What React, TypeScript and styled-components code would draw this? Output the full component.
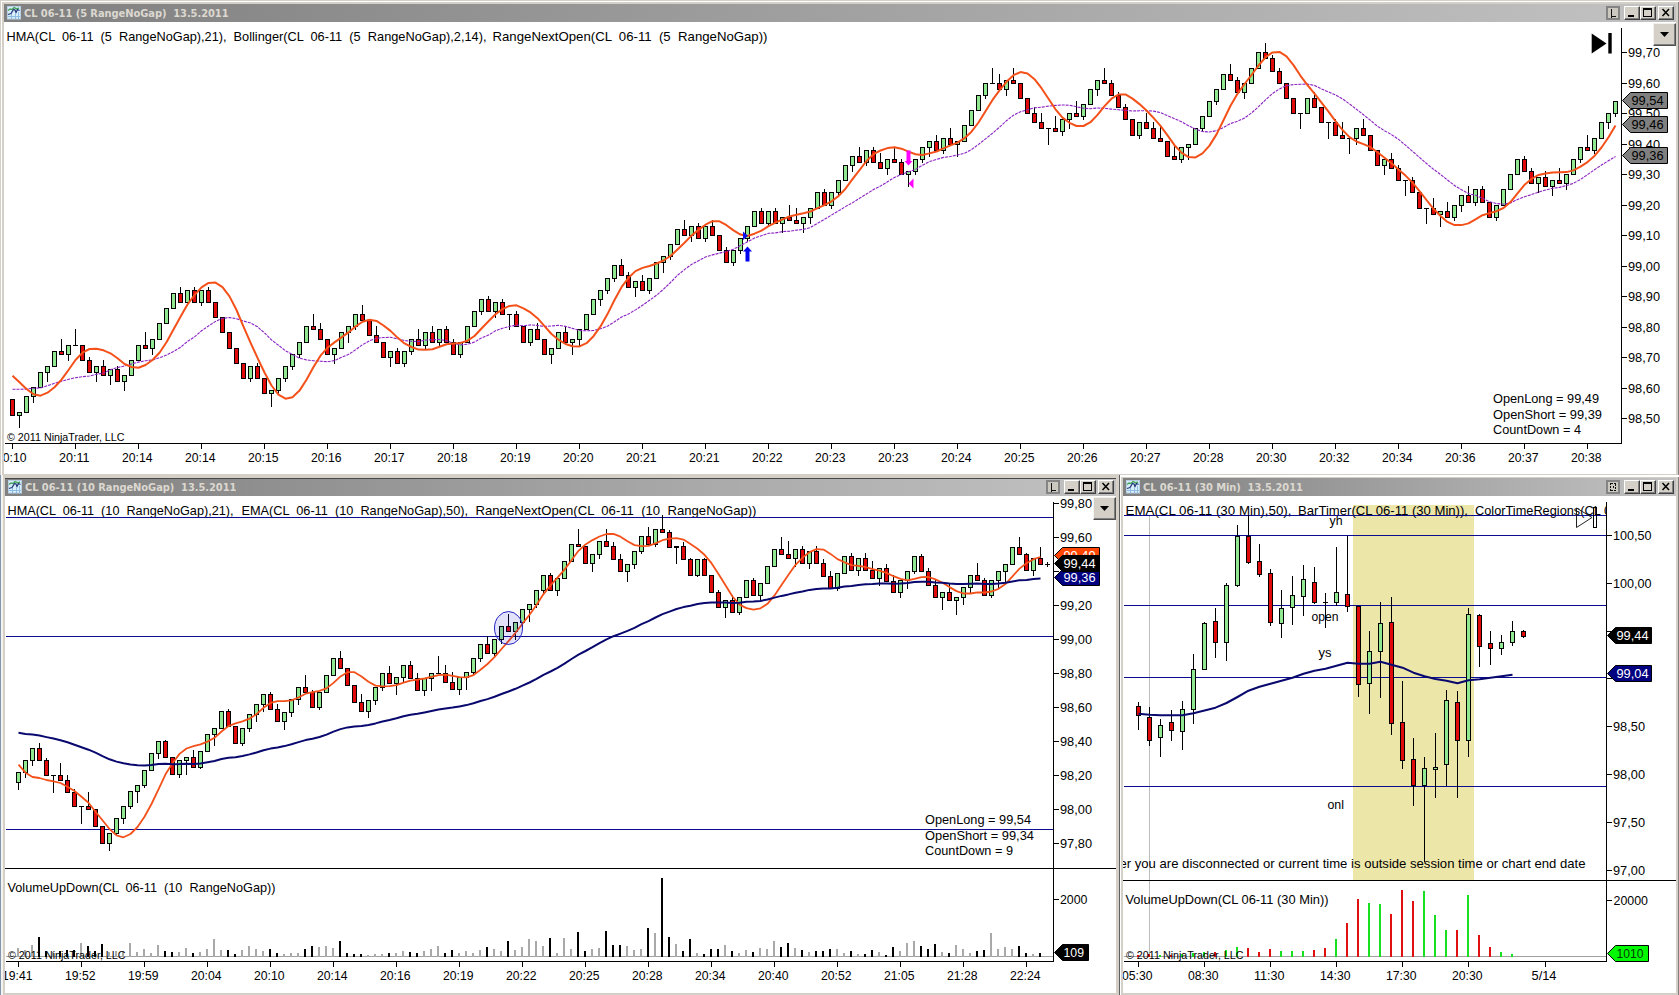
import React from 'react';
import styled, { createGlobalStyle } from 'styled-components';

const GlobalStyle = createGlobalStyle`
  html, body { margin: 0; padding: 0; }
  body { background: #d4d0c8; overflow: hidden; }
`;

const UP = '#90e890';
const DOWN = '#e00a0a';
const HMA_COLOR = '#f4511a';
const EMA_COLOR = '#08086e';
const LEVEL_COLOR = '#0c0c90';

/* ---------- window chrome ---------- */

const Desktop = styled.div`
  width: 1679px;
  height: 995px;
  display: flex;
  flex-direction: column;
  background: #d4d0c8;
  overflow: hidden;
`;

const Row = styled.div`
  display: flex;
  height: 520px;
`;

const Window = styled.section<{ $w: number; $h: number; $pad: string; $shadow: string }>`
  box-sizing: border-box;
  display: flex;
  flex-direction: column;
  width: ${(p) => p.$w}px;
  height: ${(p) => p.$h}px;
  padding: ${(p) => p.$pad};
  background: #d4d0c8;
  box-shadow: ${(p) => p.$shadow};
`;

const TitleBar = styled.header<{ $edge?: boolean }>`
  box-sizing: border-box;
  display: flex;
  align-items: center;
  flex: 0 0 18px;
  height: 18px;
  padding: 0 2px 0 3px;
  background: linear-gradient(90deg, #808080, #c2c2c2);
  box-shadow: ${(p) => (p.$edge ? 'inset 0 1px 0 #484848' : 'none')};
`;

const TitleText = styled.h1`
  flex: 1;
  margin: 0 0 0 3px;
  padding-top: 1px;
  font: bold 11px/17px 'DejaVu Sans Condensed', 'DejaVu Sans', sans-serif;
  letter-spacing: -0.05px;
  color: #dcd8d0;
  white-space: pre;
`;

const LinkButton = styled.span`
  box-sizing: border-box;
  display: flex;
  align-items: center;
  justify-content: center;
  width: 14px;
  height: 14px;
  margin-right: 4px;
  border: 2px solid #848484;
  background: #cbc8c0;
`;

const CaptionButton = styled.button<{ $gap?: boolean }>`
  box-sizing: border-box;
  display: block;
  width: 16px;
  height: 14px;
  margin: 0 0 0 ${(p) => (p.$gap ? 2 : 0)}px;
  padding: 0;
  border: 1px solid;
  border-color: #fff #404040 #404040 #fff;
  background: #d4d0c8;
  box-shadow: inset -1px -1px 0 #808080;
  line-height: 0;
`;

const Content = styled.div`
  position: relative;
  flex: 1;
  background: #fff;
  overflow: hidden;
`;

const MenuButton = styled.button<{ $right: number }>`
  position: absolute;
  top: 1px;
  right: ${(p) => p.$right}px;
  box-sizing: border-box;
  display: flex;
  align-items: center;
  justify-content: center;
  width: 23px;
  height: 23px;
  padding: 0;
  border: 1px solid;
  border-color: #f4f2ee #505050 #505050 #f4f2ee;
  background: #d4d0c8;
  box-shadow: inset -1px -1px 0 #808080;
`;

const Plot = styled.svg`
  display: block;
  font-family: 'Liberation Sans', Arial, sans-serif;
  font-size: 13px;
  fill: #000;
  text { white-space: pre; }
`;

const ChartIcon = () => (
  <svg width="14" height="14" viewBox="0 0 14 14">
    <rect x="0.5" y="0.5" width="13" height="12.5" fill="#d8eefa" stroke="#b8cfe4" />
    <path d="M1 10.5h12M4.5 8v5M8.5 8v5M11.5 6v7" stroke="#8fbce2" strokeWidth="1" fill="none" />
    <path d="M1 4.5l2-1.500 2 .5 2-2 3 1.500 2-1" stroke="#48a45c" strokeWidth="1.400" fill="none" />
    <path d="M1 8.500l3-1 2.500-4 1.500.5 1 2.500 1.500-3 2 1" stroke="#24397c" strokeWidth="1.300" fill="none" />
  </svg>
);

interface FrameProps {
  title: string;
  edge?: boolean;
  unlinked?: boolean;
}

const Caption = ({ title, edge, unlinked }: FrameProps) => (
  <TitleBar $edge={edge}>
    <ChartIcon />
    <TitleText>{title}</TitleText>
    <LinkButton>
      <svg width="8" height="10" viewBox="0 0 8 10" shapeRendering="crispEdges">
        {unlinked ? (
          <path d="M1.500 1v8M1.500 1.500h5M1.500 8.500h5M6.500 2v7M4 3.500v3" stroke="#111" strokeDasharray="2 1" fill="none" />
        ) : (
          <path d="M2.500 1v8.500M2 8.500h5" stroke="#111" fill="none" />
        )}
      </svg>
    </LinkButton>
    <CaptionButton>
      <svg width="14" height="12"><rect x="3" y="8" width="6" height="2" /></svg>
    </CaptionButton>
    <CaptionButton>
      <svg width="14" height="12" shapeRendering="crispEdges">
        <path d="M2.500 1v8.500h8V1" stroke="#000" fill="none" />
        <rect x="2" y="1" width="9" height="2" />
      </svg>
    </CaptionButton>
    <CaptionButton $gap>
      <svg width="14" height="12"><path d="M3.500 2l6.500 7M10 2l-6.500 7" stroke="#000" strokeWidth="1.500" /></svg>
    </CaptionButton>
  </TitleBar>
);

const Menu = ({ right }: { right: number }) => (
  <MenuButton $right={right}>
    <svg width="9" height="5"><path d="M0 0h9L4.500 5z" /></svg>
  </MenuButton>
);

/* ---------- series maths ---------- */

interface Bar { x: number; up: boolean; high: number; top: number; bottom: number; low: number }

const wma = (s: number[], end: number, n: number) => {
  let sum = 0;
  for (let k = 0; k < n; k++) sum += s[end - k] * (n - k);
  return (sum * 2) / (n * (n + 1));
};

const hma21 = (s: number[], i: number) => {
  const raw = [3, 2, 1, 0].map((b) => 2 * wma(s, i - b, 10) - wma(s, i - b, 21));
  return wma(raw, 3, 4);
};

const sma14 = (s: number[], i: number) => s.slice(i - 13, i + 1).reduce((a, b) => a + b, 0) / 14;

const linePath = (ys: number[], x0: number, step: number) =>
  ys.map((y, i) => `${i ? 'L' : 'M'}${x0 + i * step} ${y.toFixed(1)}`).join('');

/** Range bars: every bar spans `range` ticks and closes on its high or its low.
 *  Levels count ticks downwards from the top label of the price axis. */
const rangeBars = (
  open: number, closes: { level: number; up: boolean }[], range: number, x0: number, y: (n: number) => number,
): Bar[] =>
  closes.map(({ level, up }, i) => {
    const prev = i ? closes[i - 1].level : open;
    const high = up ? level : level - range;
    return {
      x: x0 + i * 7,
      up,
      high: Math.round(y(high)),
      top: Math.round(y(Math.min(prev, level))),
      bottom: Math.round(y(Math.max(prev, level))) + 1,
      low: Math.round(y(high + range)) + 1,
    };
  });

const Candles = ({ bars }: { bars: Bar[] }) => (
  <g shapeRendering="crispEdges">
    {bars.map((b) => {
      const h = b.bottom - b.top;
      return (
        <g key={b.x}>
          <rect x={b.x} y={b.high} width={1} height={Math.max(1, b.low - b.high)} />
          <rect x={b.x - 2} y={b.top} width={5} height={Math.max(1, h)} />
          {h > 2 && <rect x={b.x - 1} y={b.top + 1} width={3} height={h - 2} fill={b.up ? UP : DOWN} />}
        </g>
      );
    })}
  </g>
);

/* ---------- shared drawing parts ---------- */

const Label = ({ x, y, w, size, fill, children }: {
  x: number; y: number; w: number; size?: number; fill?: string; children: string;
}) => (
  <text x={x} y={y} textLength={w} lengthAdjust="spacingAndGlyphs" fontSize={size} fill={fill}>{children}</text>
);

const Tag = ({ x, y, w, label, fill, ink, labelW = 32 }: {
  x: number; y: number; w: number; label: string; fill: string; ink: string; labelW?: number;
}) => (
  <g>
    <path d={`M${x} ${y}l8-8h${w - 8}v16h-${w - 8}z`} fill={fill} stroke="#000" />
    <Label x={x + 9} y={y + 4.5} w={labelW} fill={ink}>{label}</Label>
  </g>
);

const TimeAxis = ({ y, x1, x2, first, step, labels }: {
  y: number; x1: number; x2: number; first: number; step: number; labels: string[];
}) => (
  <g>
    <rect x={x1} y={y} width={x2 - x1 + 1} height={1} />
    {labels.map((t, i) => (
      <g key={i}>
        <rect x={first + i * step} y={y} width={1} height={6} />
        <Label x={first + i * step - 16} y={y + 19} w={30.5}>{t}</Label>
      </g>
    ))}
  </g>
);

const PriceAxis = ({ x, items }: { x: number; items: [string, number][] }) => (
  <g>
    {items.map(([t, y]) => (
      <g key={t}>
        <rect x={x + 1} y={Math.round(y)} width={5} height={1} />
        {t.startsWith('~') ? null : (
          <Label x={x + 7} y={Math.round(y) + 5} w={t.length === 6 ? 38.5 : t.length === 4 ? 27.5 : 32}>{t}</Label>
        )}
      </g>
    ))}
  </g>
);

const Levels = ({ x1, x2, ys }: { x1: number; x2: number; ys: number[] }) => (
  <g fill={LEVEL_COLOR}>{ys.map((y) => <rect key={y} x={x1} y={y} width={x2 - x1} height={1} />)}</g>
);

const Copyright = ({ x, y }: { x: number; y: number }) => (
  <Label x={x} y={y} w={117.5} size={11}>© 2011 NinjaTrader, LLC</Label>
);

/* ---------- CL 06-11, 5 range ---------- */

const moves5 = `-5 +1 +5 +3 +5 +2 +5 -1 +3 -0 -5 -4 +2 -3 +2 -4 +2 +5 +5 -1 +3 +5 +5 +5 -3 +4 -4 +4 -4 -5
-5 -5 -5 -5 +4 -4 -5 +1 +4 +4 +4 +4 +5 -1 -3 -5 +2 +5 +2 +4 -2 -5 -2 -5 +2 -4 +4 +4 -2
+4 -3 +4 -4 -4 +4 +5 +5 +4 -4 +3 -4 +0 -4 -5 +4 -3 -5 +2 +5 -3 +1 +3 +5 +5 +3 +4 +4 -3 -4 +2
-3 +4 +5 +2 +4 +5 -2 +3 -4 +4 -3 -5 -4 +4 +4 +4 +5 -4 +4 -4 +2 -1 -1 +2 +3 +5 -4 +4 +4
+5 +3 -2 +4 -4 -2 +3 -1 -4 +1 +4 +4 +2 -3 +4 -2 +1 +5 +5 +5 +4 -0 -2 +3 -1 -5 -5 -3 -2 +0
-1 +4 +2 -1 +4 +5 +3 -1 -4 -4 -4 -5 +4 -2 -3 -1 -5 -1 +4 +1 +5 +4 +5 +4 +5 -2 -4 +3 +5 +5
-2 -4 -4 -5 -5 +0 +5 -3 -5 +0 -4 -1 +0 +3 -2 -5 -5 +2 -3 -4 +0 -4 -5 +0 -2 +1 -2 +4 +3 -2
+4 -4 -5 +4 +5 +5 +5 -4 -4 +2 -3 +2 -1 +3 +5 +4 -1 +4 +5 +3 +4`.split(/\s+/);

const y5 = (n: number) => 52.3 + n * 3.045;
let level5 = 114;
const closes5 = moves5.map((m) => {
  level5 -= Number(m);
  return { level: level5, up: m[0] === '+' };
});
const bars5 = rangeBars(114, closes5, 5, 12, y5);
const series5 = closes5.map((c) => y5(c.level) + 0.5);
const hmaLead5 = [375.7, 382.3, 389, 394.3, 395.7, 392.7, 387.3, 379.7, 370, 360, 352.7, 349, 348.7, 350.3, 353.3, 358.3, 364, 367, 367.7, 365, 360, 352.7, 342.3];
const smaLead5 = [389.3, 389.3, 389, 388.3, 388, 385.7, 383.3, 381.3, 379.3, 377.7, 376.7, 376, 374.3];
const hma5 = series5.map((_, i) => hmaLead5[i] ?? hma21(series5, i));
const mid5 = series5.map((_, i) => smaLead5[i] ?? sma14(series5, i));

const times5 = '20:10 20:11 20:14 20:14 20:15 20:16 20:17 20:18 20:19 20:20 20:21 20:21 20:22 20:23 20:23 20:24 20:25 20:26 20:27 20:28 20:30 20:32 20:34 20:36 20:37 20:38'.split(' ');
const prices5 = Array.from({ length: 13 }, (_, i): [string, number] => [(99.7 - i * 0.1).toFixed(2).replace('.', ','), 52 + i * 30.5]);

const FiveRange = () => (
  <Plot width="1672" height="452" viewBox="4 22 1672 452">
    <Label x={6.5} y={41} w={220}>{'HMA(CL  06-11  (5  RangeNoGap),21),'}</Label>
    <Label x={233.5} y={41} w={253}>{'Bollinger(CL  06-11  (5  RangeNoGap),2,14),'}</Label>
    <Label x={492.500} y={41} w={275}>{'RangeNextOpen(CL  06-11  (5  RangeNoGap))'}</Label>
    <Copyright x={7} y={441} />
    <Candles bars={bars5} />
    <path d={linePath(mid5, 12.5, 7)} fill="none" stroke="#8a22c4" strokeWidth={1.1} strokeDasharray="3 1" />
    <path d={linePath(hma5, 12.5, 7)} fill="none" stroke={HMA_COLOR} strokeWidth={2} strokeLinejoin="round" />
    <path d="M743 231.500v8.500l5-4.250z" fill="#1212ee" />
    <path d="M747.500 246.500l4.500 5h-2.500v10h-4v-10h-2.500z" fill="#0000f0" />
    <path d="M908.500 165.500l4-4.500h-2v-10.500h-4v10.500h-2z" fill="#ff00ff" />
    <path d="M908.500 183.500l5-5v10z" fill="#ff00ff" />
    <path d="M1591.700 33.500v20l14.800-10z" />
    <rect x={1608.3} y={33} width={3.4} height={20.5} />
    <Label x={1493} y={403} w={106}>OpenLong = 99,49</Label>
    <Label x={1493} y={419} w={109}>OpenShort = 99,39</Label>
    <Label x={1493} y={434} w={88}>CountDown = 4</Label>
    <rect x={1621} y={28} width={1} height={416} />
    <PriceAxis x={1621} items={prices5} />
    <Tag x={1622.5} y={100.5} w={45} label="99,54" fill="#808080" ink="#000" />
    <Tag x={1622.5} y={124.5} w={45} label="99,46" fill="#808080" ink="#000" />
    <Tag x={1622.5} y={155.5} w={45} label="99,36" fill="#808080" ink="#000" />
    <TimeAxis y={443} x1={5} x2={1621} first={12} step={63} labels={times5} />
  </Plot>
);

/* ---------- CL 06-11, 10 range ---------- */

const levels10 = [
  158, 151, 144, 151, 160, 160, 163, 170, 178, 178, 180, 190, 200, 194, 185, 178, 169, 166, 157, 147, 140, 149, 159, 151,
  149, 155, 146, 136, 132, 122, 131, 141, 132, 124, 118, 112, 121, 128, 123, 115, 108, 111, 120, 111, 101, 91, 97, 107,
  117, 122, 116, 108, 100, 106, 102, 95, 103, 110, 103, 100, 100, 105, 109, 102, 99, 91, 83, 88, 80, 72, 75, 70, 62, 59,
  51, 42, 51, 44, 34, 24, 25, 35, 30, 22, 25, 33, 40, 36, 28, 19, 24, 15, 17, 26, 25, 33, 42, 33, 42, 52, 61, 57, 64, 55,
  45, 54, 47, 37, 27, 30, 32, 27, 35, 28, 35, 43, 50, 41, 31, 39, 32, 39, 44, 38, 46, 52, 45, 40, 31, 40, 48, 55, 52, 57,
  55, 49, 42, 45, 54, 45, 40, 36, 26, 30, 39, 32, 36,
];
const WICK_UP_DOJI = 60;
const y10 = (n: number) => 503.2 + n * 1.7;
const closes10 = levels10.map((level, i) => ({ level, up: i !== WICK_UP_DOJI && level <= (i ? levels10[i - 1] : 164) }));
const bars10 = rangeBars(164, closes10, 10, 18, y10);
const series10 = levels10.map((n) => y10(n) + 0.5);
const hmaLead10 = [764.7, 772.7, 777, 778, 780, 781.3, 783, 786.7, 791, 796.7, 802.7, 811.7, 820.3, 829, 835.3, 837.3, 834, 827, 816.7, 804, 789.3, 774.3, 763.3];
const hma10 = series10.map((_, i) => hmaLead10[i] ?? hma21(series10, i));
let ema = 732.8;
const ema10 = series10.map((c, i) => (i ? (ema += ((c - ema) * 2) / 51) : ema));

/* volume bar heights, in thirds of a pixel */
const volume10 = [
  25, 17, 34, 58, 14, 11, 16, 19, 17, 40, 31, 16, 37, 13, 14, 15, 40, 13, 22, 10, 34, 16, 12, 13, 25, 10, 13, 22, 52, 19,
  19, 7, 19, 31, 22, 16, 22, 10, 7, 10, 10, 22, 31, 28, 31, 25, 46, 10, 7, 7, 4, 7, 7, 10, 10, 16, 13, 10, 16, 22, 31, 10,
  19, 10, 16, 10, 19, 28, 22, 16, 46, 19, 28, 52, 46, 31, 55, 9, 55, 22, 73, 16, 22, 25, 76, 34, 34, 31, 19, 22, 85, 70,
  235, 58, 37, 16, 52, 10, 7, 22, 22, 34, 16, 10, 19, 13, 25, 22, 46, 28, 40, 25, 19, 13, 16, 16, 22, 22, 10, 16, 7, 7, 19,
  13, 4, 28, 16, 40, 46, 31, 22, 37, 13, 10, 34, 22, 10, 16, 19, 70, 22, 28, 22, 31, 10, 7, 10,
];

const times10 = '19:41 19:52 19:59 20:04 20:10 20:14 20:16 20:19 20:22 20:25 20:28 20:34 20:40 20:52 21:05 21:28 22:24'.split(' ');
const prices10 = Array.from({ length: 11 }, (_, i): [string, number] => {
  const t = (99.8 - i * 0.2).toFixed(2).replace('.', ',');
  return [i === 2 ? `~${t}` : t, 503 + i * 34];
});

const TenRange = () => (
  <Plot width="1111" height="497" viewBox="5 496 1111 497">
    <Label x={7.5} y={515} w={226}>{'HMA(CL  06-11  (10  RangeNoGap),21),'}</Label>
    <Label x={241.5} y={515} w={226.5}>{'EMA(CL  06-11  (10  RangeNoGap),50),'}</Label>
    <Label x={475.5} y={515} w={281}>{'RangeNextOpen(CL  06-11  (10  RangeNoGap))'}</Label>
    <Levels x1={6} x2={1053} ys={[517, 636, 829]} />
    <Candles bars={bars10} />
    <path d={linePath(hma10, 18.5, 7)} fill="none" stroke={HMA_COLOR} strokeWidth={1.8} strokeLinejoin="round" />
    <path d={linePath(ema10, 18.5, 7)} fill="none" stroke={EMA_COLOR} strokeWidth={2} strokeLinejoin="round" />
    <rect x={1045} y={564} width={5} height={1} />
    <rect x={1047} y={562} width={1} height={5} />
    <ellipse cx={508.5} cy={628} rx={14} ry={16.5} fill="rgba(20,20,220,0.12)" stroke="#2222c4" />
    <Label x={925} y={824} w={106}>OpenLong = 99,54</Label>
    <Label x={925} y={840} w={109}>OpenShort = 99,34</Label>
    <Label x={925} y={855} w={88}>CountDown = 9</Label>
    <rect x={5} y={868} width={1111} height={1} />
    <Label x={7.5} y={892} w={268}>{'VolumeUpDown(CL  06-11  (10  RangeNoGap))'}</Label>
    <rect x={6} y={956} width={1047} height={1} fill="#a0a0a0" />
    <g shapeRendering="crispEdges">
      {volume10.map((v, i) => {
        const h = Math.round(v / 3);
        const down = levels10[i] > (i ? levels10[i - 1] : 164);
        return <rect key={i} x={17 + i * 7} y={956 - h} width={2} height={h + 1} fill={down ? '#000' : '#a9a9a9'} />;
      })}
    </g>
    <Copyright x={8} y={959} />
    <rect x={1053} y={502} width={1} height={460} />
    <PriceAxis x={1053} items={prices10} />
    <PriceAxis x={1053} items={[['2000', 899]]} />
    <Tag x={1054.5} y={555.5} w={45} label="99,49" fill="#ff4500" ink="#fff" />
    <Tag x={1054.5} y={577.5} w={45} label="99,36" fill="#000080" ink="#fff" />
    <Tag x={1054.5} y={563.5} w={45} label="99,44" fill="#000" ink="#fff" />
    <Tag x={1054.5} y={952.5} w={34} label="109" fill="#000" ink="#fff" labelW={20.5} />
    <TimeAxis y={961} x1={6} x2={1053} first={18} step={63} labels={times10} />
  </Plot>
);

/* ---------- CL 06-11, 30 minutes ---------- */

const ohlc30 = `r702,706,716,730 r707,717,741,746 g719,725,738,757 r710,722,731,741 g701,709,732,750 g654,669,710,724
g622,623,670,670 r608,621,643,658 g583,585,643,661 g525,536,586,587 r515,536,563,564 r544,561,575,577 r569,573,623,626
g590,608,624,638 g576,595,608,625 g565,579,597,616 r567,582,603,604 r593,602,602,628 g547,592,603,606 r536,594,607,612
r606,606,685,697 g631,651,684,714 g602,623,652,698 r597,622,724,735 r681,722,761,769 r738,759,786,806 g757,768,786,862
g733,767,770,798 g690,700,765,786 r691,702,741,798 g608,614,741,757 r614,615,647,667 r631,643,649,665 g635,642,649,655
g621,631,643,646 r630,631,637,638`.split(/\s+/);

const bars30: Bar[] = ohlc30.map((s, i) => {
  const [high, top, bottom, low] = s.slice(1).split(',').map(Number);
  return { x: 1138 + i * 11, up: s[0] === 'g', high, top, bottom, low };
});
const ema30 = [
  713.7, 714.7, 715.3, 715.3, 715.3, 713.3, 710.5, 707.7, 703, 697, 690.7, 686.7, 683.7, 680.7, 677.7, 673.7, 670.7, 668.7,
  665.7, 662.7, 663.7, 663.7, 661.7, 664.7, 667.7, 672.7, 676.3, 679, 680.7, 683.3, 680.3, 679.3, 677.7, 676.3, 674.7,
];
const volume30 = [
  4, 7, 4, 4, 5, 8, 13, 12, 18, 27, 25, 13, 22, 16, 16, 16, 19, 25, 52, 100, 172, 160, 157, 127, 199, 166, 196, 124, 79,
  79, 184, 64, 28, 12, 7,
];

const ThirtyMin = () => (
  <Plot width="553" height="497" viewBox="1123 496 553 497">
    <defs>
      <clipPath id="plot30"><rect x={1123} y={496} width={483} height={470} /></clipPath>
    </defs>
    <rect x={1353} y={505} width={121} height={375} fill="#ede6a9" />
    <rect x={1149} y={516} width={1} height={440} fill="#bdbdbd" />
    <g clipPath="url(#plot30)">
      <Label x={1125.5} y={515} w={166}>{'EMA(CL 06-11 (30 Min),50),'}</Label>
      <Label x={1298} y={515} w={170}>{'BarTimer(CL 06-11 (30 Min)),'}</Label>
      <Label x={1475} y={515} w={136}>{'ColorTimeRegions(CL 0'}</Label>
    </g>
    <Levels x1={1124} x2={1606} ys={[515, 535, 605, 677, 786]} />
    <Candles bars={bars30} />
    <path d={linePath(ema30, 1138.5, 11)} fill="none" stroke={EMA_COLOR} strokeWidth={2} strokeLinejoin="round" />
    <path d="M1576.500 508v19.500l15.500-10z" fill="none" stroke="#222" />
    <rect x={1593.5} y={507.5} width={3} height={20} fill="none" stroke="#000" />
    <Label x={1329.5} y={525} w={13}>yh</Label>
    <Label x={1311.5} y={621} w={27}>open</Label>
    <Label x={1318.5} y={657} w={13}>ys</Label>
    <Label x={1327.5} y={809} w={16.5}>onl</Label>
    <Label x={1119.5} y={868} w={466}>er you are disconnected or current time is outside session time or chart end date</Label>
    <rect x={1123} y={880} width={553} height={1} />
    <Label x={1125.5} y={904} w={203}>{'VolumeUpDown(CL 06-11 (30 Min))'}</Label>
    <rect x={1124} y={956} width={482} height={1} fill="#a0a0a0" />
    <g shapeRendering="crispEdges">
      {volume30.map((v, i) => {
        const h = Math.round(v / 3);
        return <rect key={i} x={1137 + i * 11} y={956 - h} width={2} height={h + 1} fill={bars30[i].up ? '#18e020' : '#e01010'} />;
      })}
    </g>
    <Copyright x={1126} y={959} />
    <rect x={1606} y={502} width={1} height={460} />
    <PriceAxis
      x={1606}
      items={[
        ['100,50', 535], ['100,00', 583], ['~99,50', 631], ['~99,00', 678], ['98,50', 726], ['98,00', 774], ['97,50', 822], ['97,00', 870],
      ]}
    />
    <PriceAxis x={1606} items={[['~20000', 900]]} />
    <Label x={1613.5} y={905} w={34.5}>20000</Label>
    <Tag x={1607.5} y={635.5} w={44} label="99,44" fill="#000" ink="#fff" />
    <Tag x={1607.5} y={673.5} w={44} label="99,04" fill="#000080" ink="#fff" />
    <Tag x={1607.5} y={953.5} w={41} label="1010" fill="#00f800" ink="#063c06" labelW={27} />
    <TimeAxis y={961} x1={1124} x2={1606} first={1138} step={66} labels={['05:30', '08:30', '11:30', '14:30', '17:30', '20:30']} />
    <rect x={1545} y={961} width={1} height={6} />
    <Label x={1531.5} y={980} w={25}>5/14</Label>
  </Plot>
);

export default function App() {
  return (
    <>
      <GlobalStyle />
      <Desktop>
        <Window $w={1679} $h={475} $pad="4px 3px 1px 4px" $shadow="inset 1px 1px 0 #d4d0c8, inset 2px 2px 0 #fff, inset -1px 0 0 #808080">
          <Caption title="CL 06-11 (5 RangeNoGap)  13.5.2011" />
          <Content>
            <FiveRange />
            <Menu right={0} />
          </Content>
        </Window>
        <Row>
          <Window $w={1120} $h={520} $pad="3px 4px 2px 5px" $shadow="inset 1px 0 0 #8296ae, inset 3px 0 0 #f4f3f0, inset -1px 0 0 #606060">
            <Caption title="CL 06-11 (10 RangeNoGap)  13.5.2011" edge />
            <Content>
              <TenRange />
              <Menu right={0} />
            </Content>
          </Window>
          <Window $w={559} $h={520} $pad="3px 3px 2px 3px" $shadow="inset 1px 2px 0 #fff, inset -1px 0 0 #808080">
            <Caption title="CL 06-11 (30 Min)  13.5.2011" unlinked />
            <Content>
              <ThirtyMin />
            </Content>
          </Window>
        </Row>
      </Desktop>
    </>
  );
}
